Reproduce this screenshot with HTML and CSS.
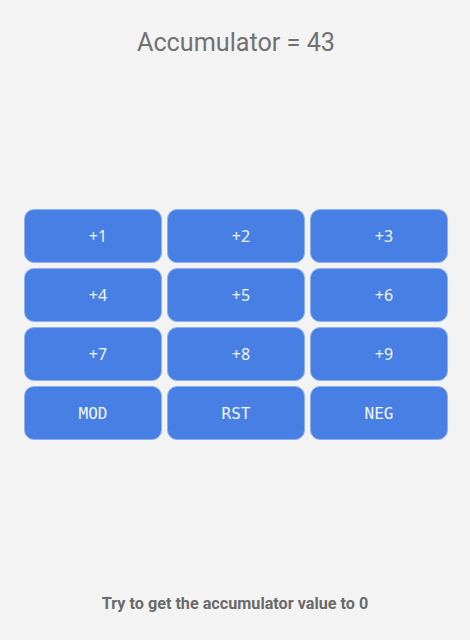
FILE: index.html
```html
<!DOCTYPE html>
<html>
<head>
<meta charset="utf-8">
<link rel="stylesheet" href="styles.css">
</head>
<body>
<div class="page">
  <h1 class="title">Accumulator = 43</h1>
  <div class="pad">
    <button class="key">+1</button>
    <button class="key">+2</button>
    <button class="key">+3</button>
    <button class="key">+4</button>
    <button class="key">+5</button>
    <button class="key">+6</button>
    <button class="key">+7</button>
    <button class="key">+8</button>
    <button class="key">+9</button>
    <button class="key mono">MOD</button>
    <button class="key mono">RST</button>
    <button class="key mono">NEG</button>
  </div>
  <p class="hint">Try to get the accumulator value to 0</p>
</div>
</body>
</html>
```
FILE: styles.css
```css
html, body {
  margin: 0;
  padding: 0;
  background: #f3f3f3;
}
.page {
  width: 470px;
  height: 640px;
  display: flex;
  flex-direction: column;
  align-items: center;
  font-family: Roboto, "Liberation Sans", sans-serif;
}
.title {
  margin: 26px 0 0 2px;
  height: 34px;
  line-height: 34px;
  font-size: 25.2px;
  font-weight: 400;
  color: #717171;
}
.pad {
  margin: 149px 0 0 2px;
  width: 424px;
  display: grid;
  grid-template-columns: repeat(3, 1fr);
  grid-auto-rows: 54px;
  gap: 5px;
}
.key {
  margin: 0;
  padding: 0 0 0 10px;
  border: 1px solid #8fb0ee;
  border-radius: 10px;
  background: #477fe4;
  color: #f2f5fc;
  font-family: "Noto Sans", sans-serif;
  font-size: 16px;
}
.key.mono {
  padding: 0;
  font-family: "DejaVu Sans Mono", monospace;
  font-size: 16px;
}
.hint {
  margin: 154px 0 0;
  line-height: 20px;
  font-size: 16.2px;
  font-weight: 700;
  color: #6a6a6a;
}
```
